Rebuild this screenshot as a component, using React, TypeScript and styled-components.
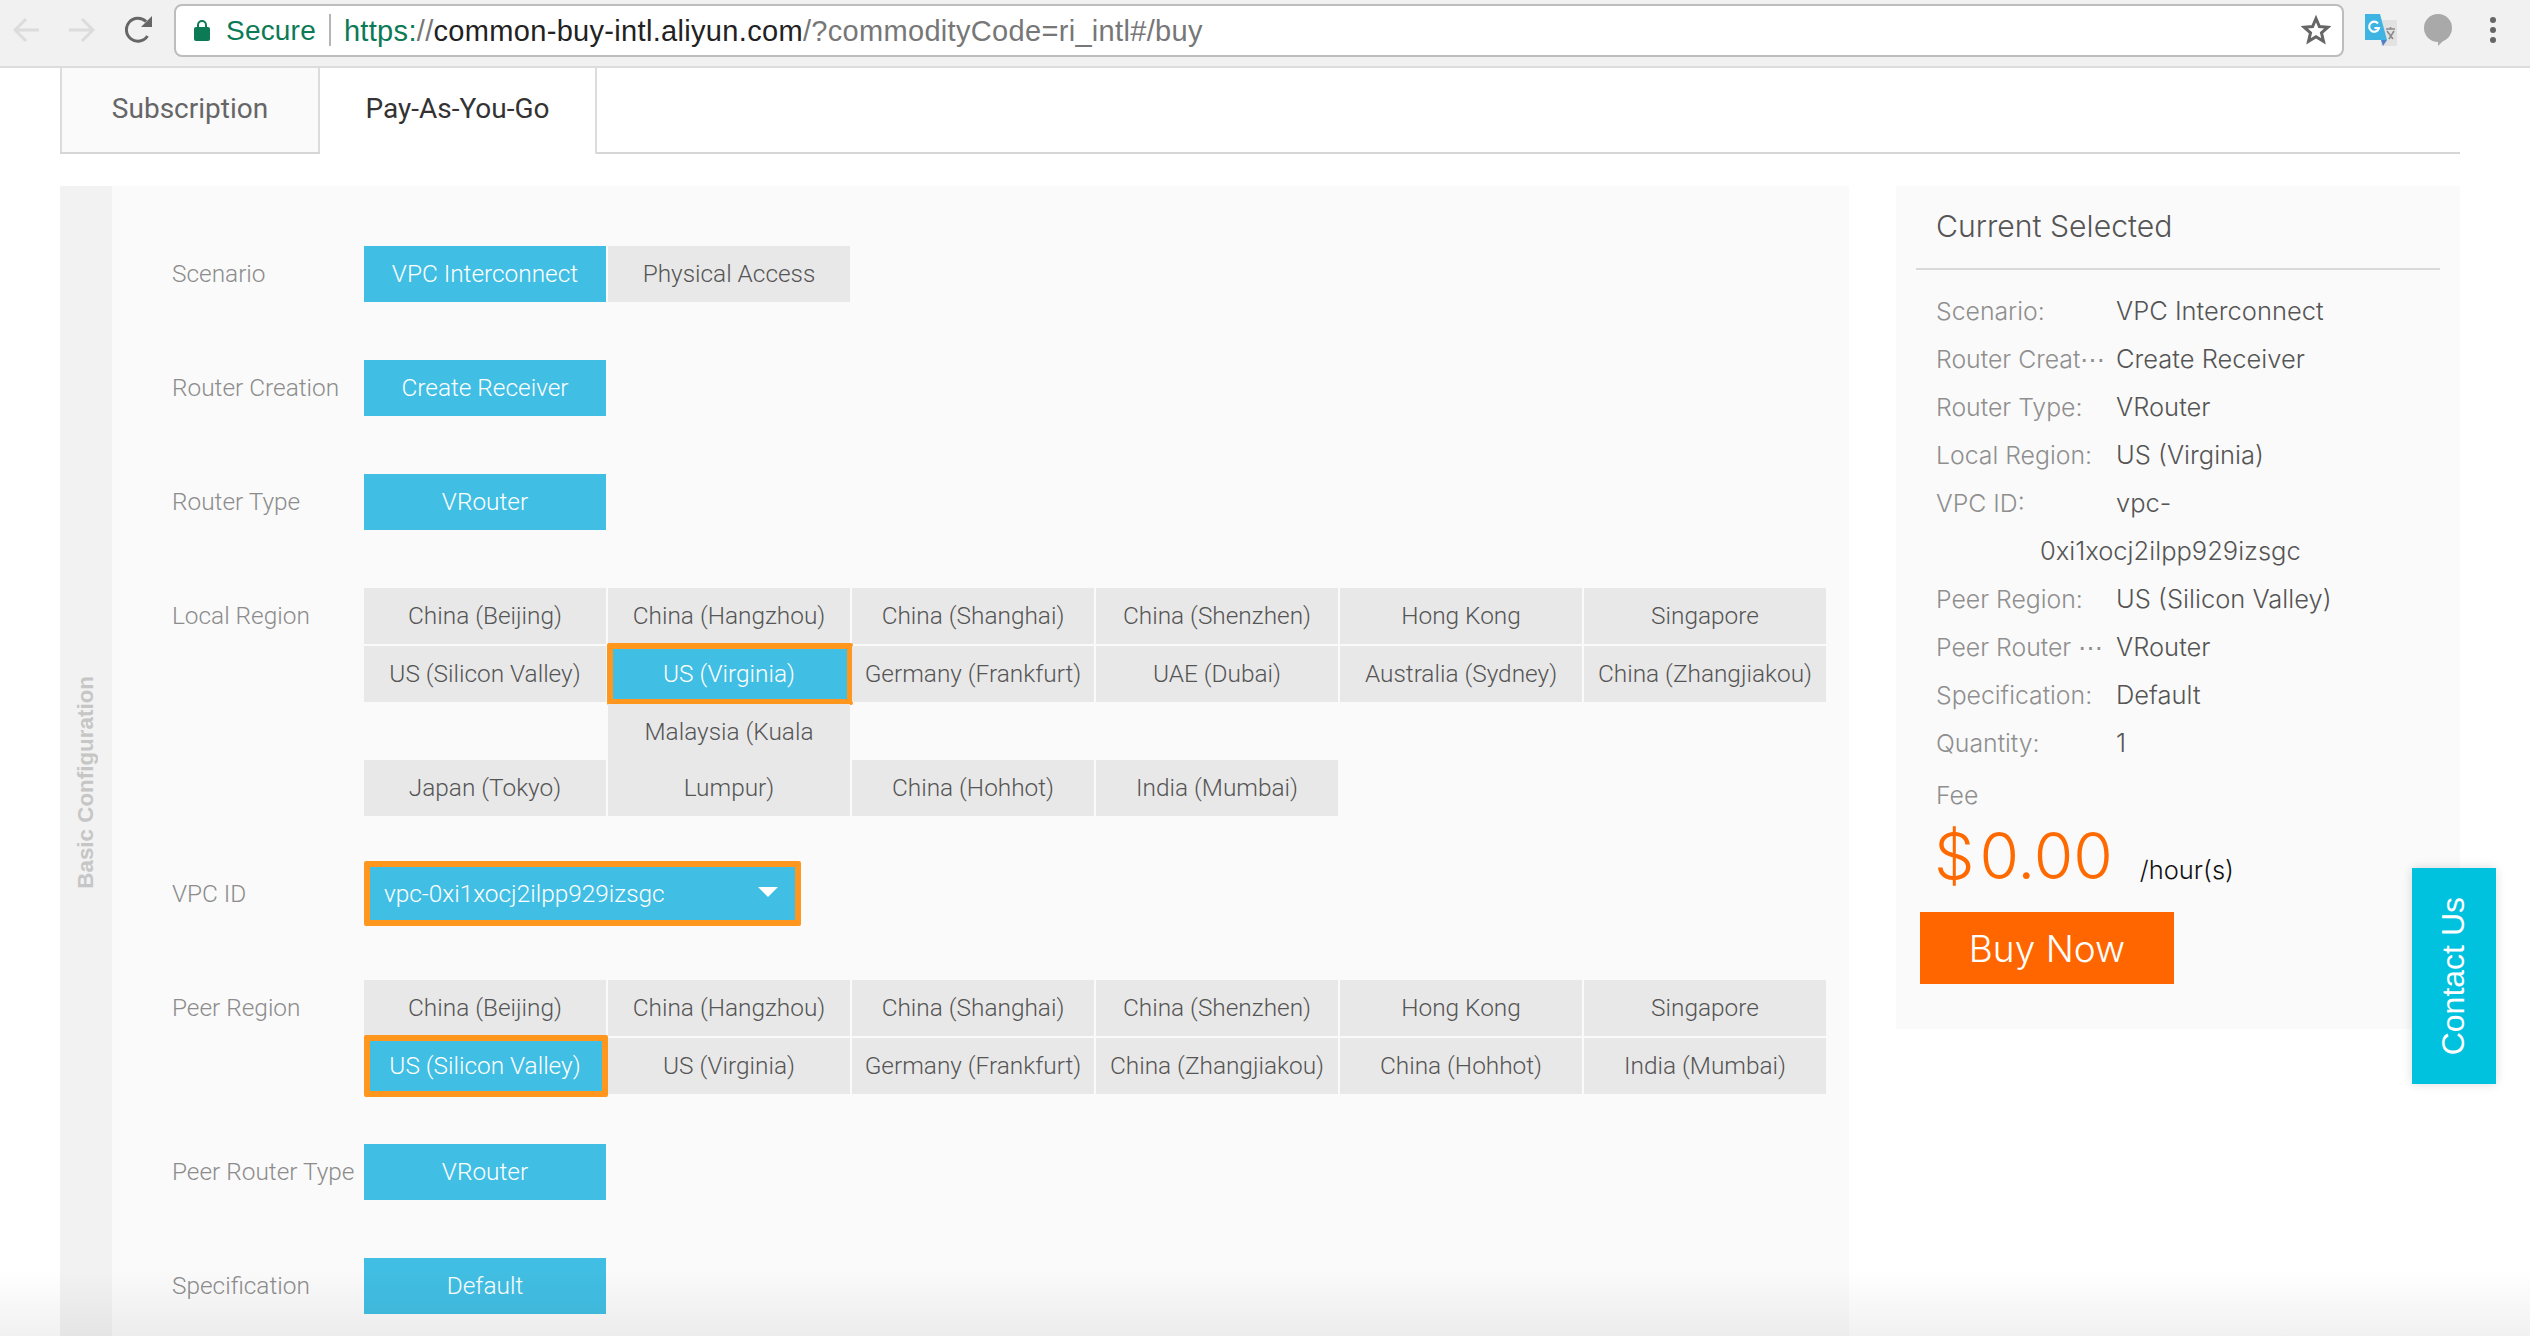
import React from "react";
import styled, { createGlobalStyle } from "styled-components";

const Global = createGlobalStyle`
  html, body { margin: 0; padding: 0; background: #fff; overflow: hidden; }
  * { box-sizing: border-box; }
`;

const Page = styled.div`
  position: relative;
  width: 2530px;
  height: 1336px;
  overflow: hidden;
  font-family: Roboto, "Liberation Sans", sans-serif;
`;

const Toolbar = styled.header`
  display: flex;
  align-items: center;
  height: 68px;
  padding: 0 0 6px 0;
  background: #f1f1f1;
  border-bottom: 2px solid #dcdcdc;
`;

const NavIcon = styled.svg<{ $ml: number }>`
  flex: none;
  margin-left: ${(p) => p.$ml}px;
  display: block;
`;

const AddressBar = styled.div`
  flex: none;
  display: flex;
  align-items: center;
  width: 2170px;
  height: 53px;
  margin: 0 0 0 21px;
  padding: 0 11px 0 18px;
  background: #fff;
  border: 2px solid #bdbdbd;
  border-radius: 8px;
  font-family: "Liberation Sans", Arial, sans-serif;
  font-size: 28px;
  white-space: nowrap;
`;

const SecureText = styled.span`
  margin-left: 16px;
  padding-top: 2px;
  color: #0b7a55;
  letter-spacing: 0.2px;
`;

const Separator = styled.span`
  width: 2px;
  height: 32px;
  margin: 0 13px 0 13px;
  background: #b5b5b5;
`;

const Url = styled.span`
  flex: 1;
  padding-top: 2px;
  font-size: 29px;
  color: #777;
  letter-spacing: 0.32px;
`;

const UrlScheme = styled.span`
  color: #0b7a55;
`;

const UrlHost = styled.span`
  color: #222;
`;

const Content = styled.main`
  padding: 0 70px 0 60px;
`;

const TabBar = styled.div`
  display: flex;
  height: 86px;
  border-bottom: 2px solid #d6d6d6;
`;

const Tab = styled.div<{ $active?: boolean; $w: number }>`
  width: ${(p) => p.$w}px;
  height: ${(p) => (p.$active ? 86 : 84)}px;
  display: flex;
  align-items: center;
  justify-content: center;
  padding-bottom: ${(p) => (p.$active ? 6 : 4)}px;
  font-size: 28px;
  color: ${(p) => (p.$active ? "#333" : "#666")};
  background: ${(p) => (p.$active ? "#fff" : "#fafafa")};
  border-right: 2px solid #dcdcdc;
  border-left: ${(p) => (p.$active ? "none" : "2px solid #dcdcdc")};
`;

const Columns = styled.div`
  display: flex;
  align-items: flex-start;
  gap: 47px;
  margin-top: 32px;
`;

const Panel = styled.section`
  flex: none;
  display: flex;
  width: 1789px;
  background: #fafafa;
`;

const SideStrip = styled.div`
  flex: none;
  width: 52px;
  display: flex;
  align-items: center;
  justify-content: center;
  background: #f2f2f2;
`;

const SideTitle = styled.span`
  writing-mode: vertical-rl;
  transform: rotate(180deg);
  font-family: "Liberation Sans", Arial, sans-serif;
  font-weight: 700;
  font-size: 22.4px;
  color: #c6c6c6;
`;

const Form = styled.div`
  flex: 1;
  padding: 60px 0 64px 60px;
`;

const Row = styled.div<{ $mb: number }>`
  display: flex;
  margin-bottom: ${(p) => p.$mb}px;
`;

const Label = styled.div<{ $lh?: number }>`
  flex: none;
  width: 192px;
  line-height: ${(p) => p.$lh ?? 56}px;
  font-size: 24.4px;
  font-weight: 300;
  color: #8c8c8c;
  white-space: nowrap;
`;

const Options = styled.div`
  display: grid;
  grid-template-columns: repeat(6, 242px);
  gap: 2px;
  align-items: end;
`;

const Option = styled.div<{ $active?: boolean; $ring?: string; $tall?: boolean }>`
  position: relative;
  min-height: ${(p) => (p.$tall ? 112 : 56)}px;
  line-height: 56px;
  text-align: center;
  font-size: 24.4px;
  font-weight: 300;
  padding: 0 ${(p) => (p.$tall ? 20 : 0)}px;
  white-space: ${(p) => (p.$tall ? "normal" : "nowrap")};
  color: ${(p) => (p.$active ? "#fff" : "#555")};
  background: ${(p) => (p.$active ? "#41bee3" : "#e8e8e8")};
  ${(p) =>
    p.$ring
      ? `&::after {
          content: "";
          position: absolute;
          inset: ${p.$ring};
          border: 6px solid #ff961e;
          border-radius: 2px;
        }`
      : ""}
`;

const SelectBox = styled.div`
  position: relative;
  display: flex;
  align-items: center;
  justify-content: space-between;
  width: 437px;
  height: 65px;
  padding: 0 17px 0 14px;
  font-size: 24.4px;
  font-weight: 300;
  color: #fff;
  background: #41bee3;
  border: 6px solid #ff961e;
  border-radius: 2px;
`;

const Caret = styled.span`
  width: 0;
  height: 0;
  margin-top: -4px;
  border-left: 10px solid transparent;
  border-right: 10px solid transparent;
  border-top: 10px solid #fff;
`;

const Card = styled.aside`
  flex: none;
  width: 564px;
  height: 843px;
  padding: 0 20px;
  background: #fafafa;
  font-family: Inter, "Liberation Sans", sans-serif;
  font-weight: 300;
`;

const CardTitle = styled.h2`
  margin: 0;
  padding: 0 0 4px 20px;
  height: 84px;
  line-height: 80px;
  font-size: 30.2px;
  font-weight: 300;
  color: #555;
  border-bottom: 2px solid #d9d9d9;
`;

const Summary = styled.dl`
  margin: 17px 0 0;
  padding-left: 20px;
`;

const SummaryRow = styled.div`
  display: flex;
  line-height: 48px;
  height: 48px;
  font-size: 25.5px;
`;

const Term = styled.dt`
  flex: none;
  width: 180px;
  font-size: 24.8px;
  color: #8f8f8f;
  white-space: nowrap;
`;

const Desc = styled.dd`
  margin: 0;
  color: #555;
  white-space: nowrap;
`;

const WrappedDesc = styled.dd`
  margin: 0 0 0 104px;
  color: #555;
  white-space: nowrap;
`;

const FeeLabel = styled.div`
  margin: 4px 0 0 20px;
  line-height: 48px;
  font-size: 24.8px;
  color: #8f8f8f;
`;

const PriceRow = styled.div`
  display: flex;
  align-items: baseline;
  gap: 27px;
  height: 76px;
  line-height: 74px;
  margin-left: 18px;
`;

const Price = styled.span`
  font-size: 64px;
  word-spacing: -13px;
  color: #ff6a00;
`;

const PriceUnit = styled.span`
  font-size: 25.5px;
  color: #111;
`;

const BuyButton = styled.div`
  display: flex;
  align-items: center;
  justify-content: center;
  width: 254px;
  height: 72px;
  margin: 17px 0 0 4px;
  font-size: 37px;
  color: #fff;
  background: #ff6600;
`;

const ContactTab = styled.div`
  position: absolute;
  left: 2412px;
  top: 868px;
  width: 84px;
  height: 216px;
  display: flex;
  align-items: center;
  justify-content: center;
  padding-right: 2px;
  background: #00c1de;
  box-shadow: 0 0 10px rgba(0, 0, 0, 0.14);
`;

const ContactText = styled.span`
  writing-mode: vertical-rl;
  transform: rotate(180deg);
  font-family: "Liberation Sans", Arial, sans-serif;
  font-size: 32px;
  color: #fff;
`;

const BottomShade = styled.div`
  position: absolute;
  left: 0;
  right: 0;
  bottom: 0;
  height: 66px;
  pointer-events: none;
  background: linear-gradient(to bottom, rgba(0, 0, 0, 0), rgba(0, 0, 0, 0.055));
`;

const Back = () => (
  <NavIcon $ml={13} width="26" height="24" viewBox="0 0 26 24" fill="none" stroke="#dcdcdc" strokeWidth="3">
    <path d="M26 12H2M13 1 2 12l11 11" />
  </NavIcon>
);
const Forward = () => (
  <NavIcon $ml={30} width="26" height="24" viewBox="0 0 26 24" fill="none" stroke="#dcdcdc" strokeWidth="3">
    <path d="M0 12h24M13 1l11 11-11 11" />
  </NavIcon>
);
const Reload = () => (
  <NavIcon $ml={30} width="28" height="28" viewBox="0 0 28 28" fill="none">
    <path d="M22.5 20A11.5 11.5 0 1 1 21 5.5" stroke="#666" strokeWidth="3" />
    <path d="M27 0v11H16z" fill="#666" />
  </NavIcon>
);
const Lock = () => (
  <svg width="16" height="22" viewBox="0 0 16 22" style={{ flex: "none" }}>
    <path d="M4 9V6a4 4 0 0 1 8 0v3" fill="none" stroke="#0b7a55" strokeWidth="2" />
    <rect x="0" y="8" width="16" height="14" rx="2" fill="#0b7a55" />
  </svg>
);
const Star = () => (
  <svg width="30" height="30" viewBox="0 0 30 30" style={{ flex: "none" }}>
    <path d="M15 3.5l3.4 8 8.6.7-6.5 5.7 2 8.4L15 21.8l-7.5 4.5 2-8.4L3 12.2l8.6-.7z" fill="none" stroke="#666" strokeWidth="3" />
  </svg>
);
const Translate = () => (
  <NavIcon $ml={21} width="32" height="32" viewBox="0 0 32 32">
    <rect x="16" y="6" width="16" height="26" fill="#e2e2e2" />
    <path d="M21 15h9M25.5 13v2M22 17l6 8M29 17l-5 8" stroke="#8a8a8a" strokeWidth="1.6" fill="none" />
    <path d="M0 0h15l7 26H0z" fill="#3db4e2" />
    <path d="M16 26h6l-4 6z" fill="#4f7fc4" />
    <path d="M13 9.5a5 5 0 1 0 1 4.5H9.5" fill="none" stroke="#fff" strokeWidth="2.2" />
  </NavIcon>
);
const Bubble = () => (
  <NavIcon $ml={27} width="28" height="32" viewBox="0 0 28 32">
    <circle cx="14" cy="14" r="14" fill="#a9a9a9" />
    <path d="M14 26l0 6 7-7z" fill="#a9a9a9" />
  </NavIcon>
);
const Dots = () => (
  <NavIcon $ml={38} width="6" height="26" viewBox="0 0 6 26" fill="#666">
    <circle cx="3" cy="3" r="3" />
    <circle cx="3" cy="13" r="3" />
    <circle cx="3" cy="23" r="3" />
  </NavIcon>
);

const summary: [string, string][] = [
  ["Scenario:", "VPC Interconnect"],
  ["Router Creat⋯", "Create Receiver"],
  ["Router Type:", "VRouter"],
  ["Local Region:", "US (Virginia)"],
  ["VPC ID:", "vpc-"],
];
const summaryRest: [string, string][] = [
  ["Peer Region:", "US (Silicon Valley)"],
  ["Peer Router ⋯", "VRouter"],
  ["Specification:", "Default"],
  ["Quantity:", "1"],
];

const SummaryLines = ({ rows }: { rows: [string, string][] }) => (
  <>
    {rows.map(([term, value]) => (
      <SummaryRow key={term}>
        <Term>{term}</Term>
        <Desc>{value}</Desc>
      </SummaryRow>
    ))}
  </>
);

const localRegions = [
  "China (Beijing)", "China (Hangzhou)", "China (Shanghai)", "China (Shenzhen)", "Hong Kong", "Singapore",
  "US (Silicon Valley)", "US (Virginia)", "Germany (Frankfurt)", "UAE (Dubai)", "Australia (Sydney)", "China (Zhangjiakou)",
  "Japan (Tokyo)", "Malaysia (Kuala Lumpur)", "China (Hohhot)", "India (Mumbai)",
];
const peerRegions = [
  "China (Beijing)", "China (Hangzhou)", "China (Shanghai)", "China (Shenzhen)", "Hong Kong", "Singapore",
  "US (Silicon Valley)", "US (Virginia)", "Germany (Frankfurt)", "China (Zhangjiakou)", "China (Hohhot)", "India (Mumbai)",
];

export default function App() {
  return (
    <Page>
      <Global />
      <Toolbar>
        <Back />
        <Forward />
        <Reload />
        <AddressBar>
          <Lock />
          <SecureText>Secure</SecureText>
          <Separator />
          <Url>
            <UrlScheme>https:</UrlScheme>//<UrlHost>common-buy-intl.aliyun.com</UrlHost>/?commodityCode=ri_intl#/buy
          </Url>
          <Star />
        </AddressBar>
        <Translate />
        <Bubble />
        <Dots />
      </Toolbar>
      <Content>
        <TabBar>
          <Tab $w={260}>Subscription</Tab>
          <Tab $w={277} $active>Pay-As-You-Go</Tab>
        </TabBar>
        <Columns>
          <Panel>
            <SideStrip>
              <SideTitle>Basic Configuration</SideTitle>
            </SideStrip>
            <Form>
              <Row $mb={58}>
                <Label>Scenario</Label>
                <Options>
                  <Option $active>VPC Interconnect</Option>
                  <Option>Physical Access</Option>
                </Options>
              </Row>
              <Row $mb={58}>
                <Label>Router Creation</Label>
                <Options>
                  <Option $active>Create Receiver</Option>
                </Options>
              </Row>
              <Row $mb={58}>
                <Label>Router Type</Label>
                <Options>
                  <Option $active>VRouter</Option>
                </Options>
              </Row>
              <Row $mb={45}>
                <Label>Local Region</Label>
                <Options>
                  {localRegions.map((r) => (
                    <Option
                      key={r}
                      $active={r === "US (Virginia)"}
                      $ring={r === "US (Virginia)" ? "-3px -3px -3px -1px" : undefined}
                      $tall={r.startsWith("Malaysia")}
                    >
                      {r}
                    </Option>
                  ))}
                </Options>
              </Row>
              <Row $mb={54}>
                <Label $lh={65}>VPC ID</Label>
                <SelectBox>
                  vpc-0xi1xocj2ilpp929izsgc
                  <Caret />
                </SelectBox>
              </Row>
              <Row $mb={50}>
                <Label>Peer Region</Label>
                <Options>
                  {peerRegions.map((r) => (
                    <Option
                      key={r}
                      $active={r === "US (Silicon Valley)"}
                      $ring={r === "US (Silicon Valley)" ? "-3px -2px -3px 0" : undefined}
                    >
                      {r}
                    </Option>
                  ))}
                </Options>
              </Row>
              <Row $mb={58}>
                <Label>Peer Router Type</Label>
                <Options>
                  <Option $active>VRouter</Option>
                </Options>
              </Row>
              <Row $mb={0}>
                <Label>Specification</Label>
                <Options>
                  <Option $active>Default</Option>
                </Options>
              </Row>
            </Form>
          </Panel>
          <Card>
            <CardTitle>Current Selected</CardTitle>
            <Summary>
              <SummaryLines rows={summary} />
              <SummaryRow>
                <WrappedDesc>0xi1xocj2ilpp929izsgc</WrappedDesc>
              </SummaryRow>
              <SummaryLines rows={summaryRest} />
            </Summary>
            <FeeLabel>Fee</FeeLabel>
            <PriceRow>
              <Price>$ 0.00</Price>
              <PriceUnit>/hour(s)</PriceUnit>
            </PriceRow>
            <BuyButton>Buy Now</BuyButton>
          </Card>
        </Columns>
      </Content>
      <ContactTab>
        <ContactText>Contact Us</ContactText>
      </ContactTab>
      <BottomShade />
    </Page>
  );
}
